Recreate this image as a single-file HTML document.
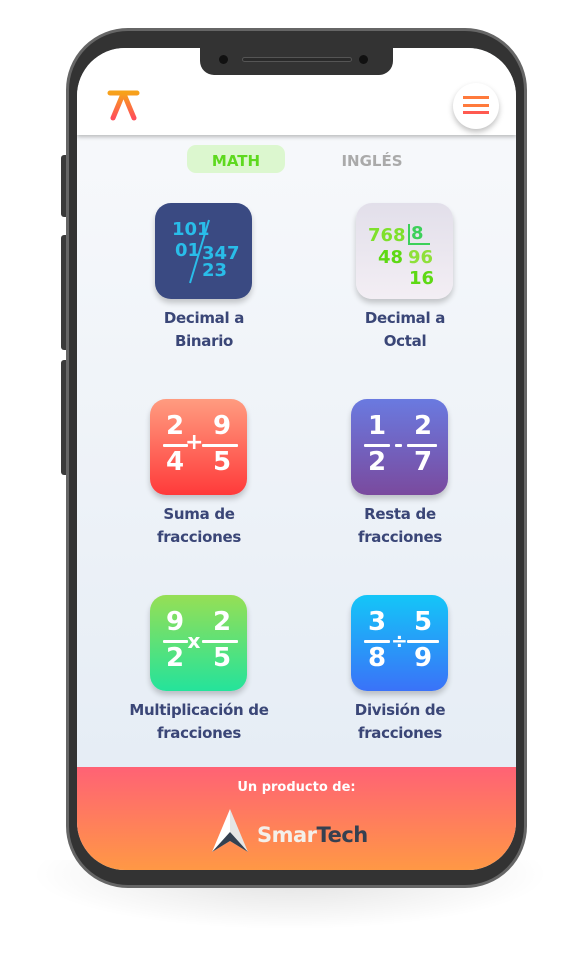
<!DOCTYPE html>
<html><head><meta charset="utf-8"><style>
*{margin:0;padding:0;box-sizing:border-box}
body{width:575px;height:962px;background:#fff;position:relative;overflow:hidden;font-family:"Liberation Sans",sans-serif}
.shadow{position:absolute;left:30px;top:860px;width:520px;height:70px;background:radial-gradient(ellipse at 50% 20%,rgba(0,0,0,.12),rgba(0,0,0,0) 70%)}
.btn{position:absolute;background:#3a3a3a;border-radius:3px;width:8px;left:61px}
.frame{position:absolute;left:66px;top:28px;width:461px;height:860px;border-radius:62px;background:#333;border:3px solid #666}
.screen{position:absolute;left:77px;top:48px;width:439px;height:822px;border-radius:48px;overflow:hidden;background:linear-gradient(#f9fafc,#e3ebf4)}
.notch{position:absolute;left:200px;top:48px;width:193px;height:27px;background:#333;border-radius:0 0 14px 14px}
.cam{position:absolute;top:55px;width:9px;height:9px;border-radius:50%;background:#111}
.spk{position:absolute;left:242px;top:57px;width:110px;height:5px;border-radius:3px;background:#2a2a2a;border:1px solid #555}
.header{position:absolute;left:0;top:0;width:439px;height:87px;background:#fff;box-shadow:0 2px 4px rgba(0,0,0,.25)}
.menu{position:absolute;left:376px;top:35px;width:46px;height:46px;border-radius:50%;background:#fff;box-shadow:0 3px 6px rgba(0,0,0,.25)}
.menu i{position:absolute;left:10px;width:26px;height:3px;background:#ff7a3c}
.tab{position:absolute;top:97px;height:28px;border-radius:9px;font-weight:bold;font-size:15px;line-height:32px;text-align:center;font-family:"DejaVu Sans",sans-serif}
.tile{position:absolute;width:97px;height:96px;border-radius:16px;box-shadow:0 4px 6px rgba(0,0,0,.2);color:#fff;font-weight:bold;font-family:"DejaVu Sans",sans-serif}
.lbl{position:absolute;width:180px;text-align:center;font-weight:bold;font-size:15px;line-height:23px;color:#3a4677;font-family:"DejaVu Sans",sans-serif;letter-spacing:-.3px}
.fr{position:absolute;width:26px;text-align:center;font-size:26px;line-height:30px}
.bar{position:absolute;height:3px;background:#fff;border-radius:1px}
.footer{position:absolute;left:0;top:719px;width:439px;height:103px;background:linear-gradient(#ff6275,#ff9845)}
</style></head><body>
<div class="shadow"></div>
<div class="btn" style="top:155px;height:62px"></div>
<div class="btn" style="top:235px;height:115px"></div>
<div class="btn" style="top:360px;height:115px"></div>
<div class="frame"></div>
<div class="screen">
 <div class="header">
  <svg style="position:absolute;left:30px;top:40px" width="34" height="34" viewBox="0 0 34 34"><defs><linearGradient id="g" x1="0" y1="0" x2="0" y2="1"><stop offset="0" stop-color="#f7a21a"/><stop offset="1" stop-color="#ff4e5a"/></linearGradient></defs><path d="M3 5H30M16 6L6 30M17 6L27 30" stroke="url(#g)" stroke-width="5" stroke-linecap="round" fill="none"/></svg>
  <div class="menu"><i style="top:13px"></i><i style="top:21px"></i><i style="top:28px;background:#ff5a50"></i></div>
 </div>
 <div class="tab" style="left:110px;width:98px;background:#dcf7cf;color:#5ed91f">MATH</div>
 <div class="tab" style="left:245px;width:100px;color:#aaa">INGLÉS</div>

 <div class="tile" style="left:78px;top:155px;background:#3a4a82">
  <svg width="97" height="96"><g fill="#29bde9" font-family="DejaVu Sans" font-weight="bold" font-size="18"><text x="17" y="32">101</text><text x="20" y="53">01</text><text x="47" y="56">347</text><text x="47" y="73">23</text></g><line x1="54" y1="17" x2="35" y2="80" stroke="#29bde9" stroke-width="2"/></svg>
 </div>
 <div class="lbl" style="left:37px;top:259px">Decimal a<br>Binario</div>

 <div class="tile" style="left:279px;top:155px;background:linear-gradient(#e2dfea,#f3eef4)">
  <svg width="97" height="96"><g font-family="DejaVu Sans" font-weight="bold" font-size="18"><text x="12" y="38" fill="#7fe02c">768</text><text x="55" y="36" fill="#3dd05a">8</text><text x="22" y="60" fill="#5ed914">48</text><text x="52" y="60" fill="#8fe03a">96</text><text x="53" y="81" fill="#5ed914">16</text></g><path d="M53 21V41H74" stroke="#3dd05a" stroke-width="2" fill="none"/></svg>
 </div>
 <div class="lbl" style="left:238px;top:259px">Decimal a<br>Octal</div>

 <div class="tile" style="left:73px;top:351px;background:linear-gradient(#ff9c80,#ff3a3a)">
  <div class="fr" style="left:12px;top:12px">2</div><div class="bar" style="left:13px;top:45px;width:25px"></div><div class="fr" style="left:12px;top:48px">4</div>
  <div class="fr" style="left:35px;top:29px;width:16px;font-size:22px">+</div>
  <div class="fr" style="left:59px;top:12px">9</div><div class="bar" style="left:52px;top:45px;width:36px"></div><div class="fr" style="left:59px;top:48px">5</div>
 </div>
 <div class="lbl" style="left:32px;top:455px">Suma de<br>fracciones</div>

 <div class="tile" style="left:274px;top:351px;background:linear-gradient(#6a7ae0,#7a4a9e)">
  <div class="fr" style="left:13px;top:12px">1</div><div class="bar" style="left:13px;top:45px;width:26px"></div><div class="fr" style="left:13px;top:48px">2</div>
  <div class="bar" style="left:44px;top:45px;width:7px"></div>
  <div class="fr" style="left:59px;top:12px">2</div><div class="bar" style="left:56px;top:45px;width:30px"></div><div class="fr" style="left:59px;top:48px">7</div>
 </div>
 <div class="lbl" style="left:233px;top:455px">Resta de<br>fracciones</div>

 <div class="tile" style="left:73px;top:547px;background:linear-gradient(#96df55,#24e39b)">
  <div class="fr" style="left:12px;top:12px">9</div><div class="bar" style="left:13px;top:45px;width:25px"></div><div class="fr" style="left:12px;top:48px">2</div>
  <div class="fr" style="left:36px;top:31px;width:16px;font-size:20px">x</div>
  <div class="fr" style="left:59px;top:12px">2</div><div class="bar" style="left:52px;top:45px;width:36px"></div><div class="fr" style="left:59px;top:48px">5</div>
 </div>
 <div class="lbl" style="left:19px;width:206px;top:651px">Multiplicación de<br>fracciones</div>

 <div class="tile" style="left:274px;top:547px;background:linear-gradient(#14c6f8,#3a72f8)">
  <div class="fr" style="left:13px;top:12px">3</div><div class="bar" style="left:13px;top:45px;width:26px"></div><div class="fr" style="left:13px;top:48px">8</div>
  <div class="fr" style="left:40px;top:31px;width:16px;font-size:20px">÷</div>
  <div class="fr" style="left:59px;top:12px">5</div><div class="bar" style="left:56px;top:45px;width:32px"></div><div class="fr" style="left:59px;top:48px">9</div>
 </div>
 <div class="lbl" style="left:233px;top:651px">División de<br>fracciones</div>

 <div class="footer">
  <div style="position:absolute;left:0;width:439px;top:13px;text-align:center;color:#fff;font-weight:bold;font-size:13px;font-family:'DejaVu Sans',sans-serif">Un producto de:</div>
  <svg style="position:absolute;left:134px;top:40px" width="38" height="46" viewBox="0 0 38 46"><path d="M19 2L37 45L19 34Z" fill="#e5e5e5"/><path d="M19 2L1 45L19 34Z" fill="#fff"/><path d="M1 45L19 25L37 45L19 34Z" fill="#344050"/></svg>
  <div style="position:absolute;left:180px;top:56px;font-size:21px;font-weight:bold;font-family:'DejaVu Sans',sans-serif;letter-spacing:-.5px"><span style="color:#f4f0ea">Smar</span><span style="color:#364050">Tech</span></div>
 </div>
</div>
<div class="notch"></div>
<div class="cam" style="left:219px"></div>
<div class="cam" style="left:359px"></div>
<div class="spk"></div>
</body></html>
